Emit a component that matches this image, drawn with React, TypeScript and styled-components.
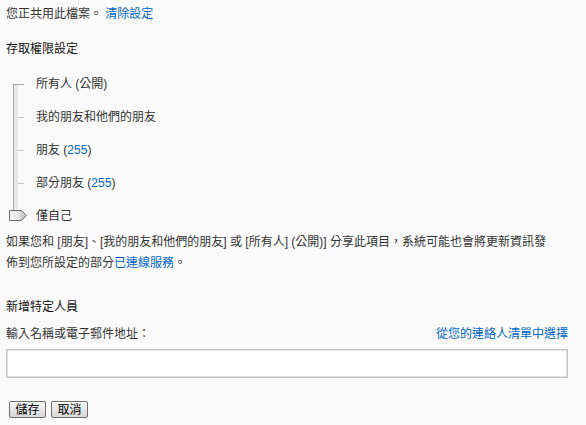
import React from 'react';
import styled, { createGlobalStyle } from 'styled-components';

const GlobalStyle = createGlobalStyle`
  html, body {
    margin: 0;
    padding: 0;
    background: #fbfbfb;
  }
  body {
    font-family: "Liberation Sans", "Noto Sans CJK TC", sans-serif;
    font-size: 12px;
    color: #333;
  }
`;

const Page = styled.div`
  width: 562px;
  padding: 4px 0 8px 6px;
`;

const Link = styled.a`
  color: #0066cc;
  text-decoration: none;
  cursor: pointer;
`;

const Intro = styled.div`
  line-height: 20px;
`;

const Heading = styled.div<{ $top: number }>`
  margin-top: ${(p) => p.$top}px;
  line-height: 20px;
  color: #111;
`;

const Slider = styled.div`
  margin-top: 8px;
  display: grid;
  grid-template-columns: 30px 1fr;
  grid-template-rows: repeat(5, 33px);
`;

const Track = styled.svg`
  grid-column: 1;
  grid-row: 1 / span 5;
  display: block;
`;

const Option = styled.div`
  grid-column: 2;
  display: flex;
  align-items: center;
  color: #333;
  line-height: 16px;
`;

const Count = styled.span`
  color: #0066cc;
`;

const Note = styled.p`
  margin: 0;
  line-height: 21px;
  width: 550px;
`;

const LabelRow = styled.div`
  margin-top: 7px;
  display: flex;
  justify-content: space-between;
  line-height: 20px;
`;

const NameInput = styled.input`
  display: block;
  box-sizing: border-box;
  margin-top: 5px;
  width: 562px;
  height: 29px;
  border: 1px solid #c4c4c4;
  box-shadow: inset 0 0 0 1px #e2e2e2;
  background: #fff;
  font: inherit;
  padding: 0 4px;
  outline: none;
`;

const Actions = styled.div`
  margin-top: 23px;
  display: flex;
  gap: 5px;
  padding-left: 3px;
`;

const Button = styled.button`
  box-sizing: border-box;
  height: 17px;
  min-width: 37px;
  padding: 0 4px;
  border: 1px solid #707070;
  border-radius: 2px;
  background: linear-gradient(#fcfcfc, #e6e6e6 55%, #d6d6d6);
  font-family: "Liberation Sans", "Noto Sans CJK TC", sans-serif;
  font-size: 12px;
  line-height: 14px;
  color: #000;
  cursor: pointer;
`;

const options = [
  { label: '所有人 (公開)' },
  { label: '我的朋友和他們的朋友' },
  { label: '朋友', count: 255 },
  { label: '部分朋友', count: 255 },
  { label: '僅自己' },
];

const SliderTrack = () => (
  <Track width="30" height="165" viewBox="0 0 30 165">
    <defs>
      <linearGradient id="thumb" x1="0" x2="1" y1="0" y2="0">
        <stop offset="0" stopColor="#f4f4f4" />
        <stop offset="0.6" stopColor="#e6e6e6" />
        <stop offset="0.61" stopColor="#cfcfcf" />
        <stop offset="1" stopColor="#c8c8c8" />
      </linearGradient>
    </defs>
    <rect x="8" y="17" width="4" height="128" fill="#e4e8e8" />
    <rect x="7" y="17" width="1" height="128" fill="#a8a8a8" />
    <rect x="7" y="17" width="11" height="1" fill="#a0a0a0" />
    {[50, 83, 116].map((y) => (
      <rect key={y} x="12" y={y} width="6" height="1" fill="#c8c8c8" />
    ))}
    <polygon
      points="3.5,143.5 15.5,143.5 20.5,148.5 15.5,153.5 3.5,153.5"
      fill="url(#thumb)"
      stroke="#707070"
      strokeWidth="1"
    />
  </Track>
);

const App = () => {
  return (
    <>
      <GlobalStyle />
      <Page>
        <Intro>
          您正共用此檔案。 <Link>清除設定</Link>
        </Intro>
        <Heading $top={15}>存取權限設定</Heading>
        <Slider>
          <SliderTrack />
          {options.map((o) => (
            <Option key={o.label}>
              {o.count ? (
                <span>
                  {o.label} (<Count>{o.count}</Count>)
                </span>
              ) : (
                o.label
              )}
            </Option>
          ))}
        </Slider>
        <Note>
          如果您和 [朋友]、[我的朋友和他們的朋友] 或 [所有人] (公開)] 分享此項目，系統可能也會將更新資訊發佈到您所設定的部分
          <Link>已連線服務</Link>。
        </Note>
        <Heading $top={23}>新增特定人員</Heading>
        <LabelRow>
          <span>輸入名稱或電子郵件地址：</span>
          <Link>從您的連絡人清單中選擇</Link>
        </LabelRow>
        <NameInput type="text" />
        <Actions>
          <Button>儲存</Button>
          <Button>取消</Button>
        </Actions>
      </Page>
    </>
  );
};

export default App;
